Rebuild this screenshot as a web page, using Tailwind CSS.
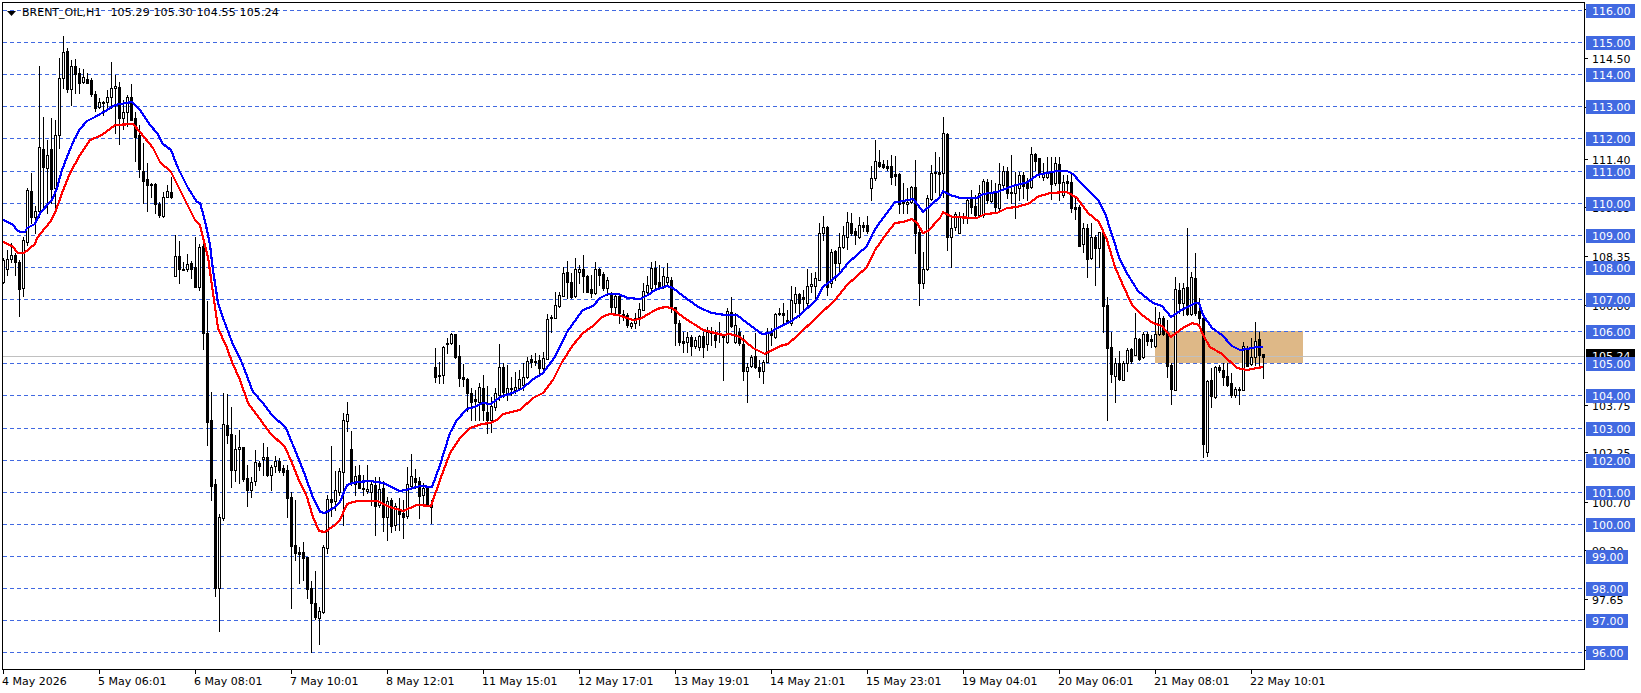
<!DOCTYPE html>
<html lang="en">
<head>
  <meta charset="UTF-8" />
  <title>BRENT_OIL,H1</title>
  <script src="https://cdn.jsdelivr.net/npm/@tailwindcss/browser@4"></script>
</head>
<body class="bg-white text-black overflow-hidden [font-family:'DejaVu_Sans',sans-serif] text-[11px] leading-[14px]">
  <div class="flex pt-[2px] pl-[2px]">
    <!-- chart window -->
    <div class="relative border border-black w-[1583px] h-[668px] shrink-0">
      <svg id="chart" class="block" width="1581" height="666" viewBox="3 3 1581 666" shape-rendering="crispEdges"></svg>
      <div class="absolute left-[4px] top-[3px] flex items-center whitespace-pre">
        <svg width="9" height="5" viewBox="0 0 9 5" class="mr-[6px]"><path d="M0 0H9L4.5 5Z" fill="#000"/></svg>
        <span>BRENT_OIL,H1</span><span class="ml-[9px] tracking-[0.15px]">105.29 105.30 104.55 105.24</span>
      </div>
    </div>
    <!-- price scale -->
    <div id="scale" class="relative w-[56px] h-[668px]"></div>
  </div>

  <!-- time scale -->
  <div id="times" class="flex pl-[3px]"></div>

  <script>
    // price level -> y pixel (as drawn by the terminal)
    const levels = [[116,10],[115,42],[114,74],[113,106],[112,138],[111,171],[110,203],[109,235],[108,267],[107,299],[106,331],
      [105,363],[104,395],[103,428],[102,460],[101,492],[100,524],[99,556],[98,588],[97,620],[96,652]];
    const axis = [['116.05',9],['114.50',58],['112.95',107],['111.40',159],['109.85',207],['108.35',256],['106.80',305],
      ['103.75',405],['102.25',452],['100.70',502],['99.20',550],['97.65',599],['96.10',650]];
    const times = ['4 May 2026','5 May 06:01','6 May 08:01','7 May 10:01','8 May 12:01','11 May 15:01','12 May 17:01',
      '13 May 19:01','14 May 21:01','15 May 23:01','19 May 04:01','20 May 06:01','21 May 08:01','22 May 10:01'];

    // candles: wick top, body top, body bottom, wick bottom, 1 = up bar (hollow)
    const bars = [
      [258,260,282,283,1],[250,259,269,275,1],[243,255,259,262,1],[253,255,262,275,0],[260,262,289,316,0],[237,240,288,296,1],
      [188,190,242,245,1],[173,191,217,223,0],[206,211,217,233,1],[66,147,211,217,1],[117,149,167,209,0],[140,155,168,213,1],
      [118,149,189,203,0],[120,135,188,212,1],[58,78,135,148,1],[36,52,78,88,1],[48,51,89,92,0],[60,66,89,105,1],
      [59,66,74,93,0],[68,73,83,93,0],[69,77,82,83,1],[73,79,83,83,0],[78,80,94,96,0],[91,94,108,111,0],
      [98,102,107,108,1],[101,102,103,115,1],[90,97,102,107,1],[62,88,97,108,1],[75,86,88,133,1],[82,87,118,144,0],
      [100,112,118,129,1],[95,97,112,126,1],[84,97,120,120,0],[112,118,137,161,0],[125,135,169,177,0],[143,171,181,203,0],
      [163,179,185,211,0],[183,184,185,197,0],[183,184,204,213,0],[202,204,215,217,0],[192,197,216,217,1],[185,191,197,197,1],
      [177,192,197,198,0],[235,256,276,276,1],[241,256,269,283,0],[262,269,270,270,0],[254,264,269,271,1],[261,263,269,278,0],
      [237,267,287,287,0],[244,247,287,290,1],[244,246,333,349,0],[301,333,422,445,0],[392,420,486,500,0],[479,484,588,596,0],
      [514,517,588,631,1],[393,424,518,520,1],[394,425,435,443,0],[407,434,470,487,0],[435,449,470,481,1],[430,447,449,483,1],
      [447,447,479,481,0],[465,478,490,506,0],[477,482,490,497,1],[450,462,481,485,1],[461,463,466,470,0],[443,457,459,475,1],
      [447,457,475,476,0],[465,467,475,490,1],[456,461,466,472,1],[458,461,470,472,0],[465,468,472,475,0],[465,470,498,517,0],
      [492,497,546,608,0],[500,545,553,560,0],[547,552,554,583,0],[542,552,558,580,0],[557,557,589,598,0],[581,588,603,652,0],
      [571,603,617,619,0],[607,611,618,644,1],[545,547,612,613,1],[495,499,548,553,1],[446,499,502,516,0],[471,490,501,510,1],
      [468,471,492,495,1],[413,420,472,525,1],[402,414,421,431,1],[431,449,483,485,0],[466,476,484,495,1],[465,475,488,488,0],
      [475,488,489,495,0],[465,489,491,493,1],[480,484,492,505,1],[477,485,506,535,0],[477,489,505,507,1],[481,488,517,531,0],
      [497,501,517,540,1],[498,500,526,532,0],[503,506,525,530,1],[498,510,514,530,0],[500,513,517,538,0],[467,484,516,518,1],
      [454,476,486,488,1],[469,478,482,488,0],[477,481,496,518,0],[483,488,495,503,1],[486,487,504,505,0],[500,505,507,523,1],
      [348,367,377,382,0],[362,375,376,383,0],[346,347,375,383,1],[338,343,344,353,1],[333,334,343,344,1],[334,334,357,358,0],
      [345,356,378,386,0],[364,377,379,386,0],[378,379,393,411,0],[388,393,402,420,0],[390,399,401,420,0],[383,387,402,420,1],
      [375,388,410,420,0],[386,412,420,433,0],[397,406,420,432,1],[388,393,407,410,1],[344,367,395,400,1],[363,367,392,397,0],
      [365,388,393,400,1],[377,388,389,395,0],[372,387,390,393,1],[370,379,388,390,1],[363,377,385,390,1],[357,361,377,378,1],
      [355,359,362,367,0],[353,361,362,365,0],[355,360,368,375,0],[352,358,368,373,1],[314,319,359,359,1],[315,317,318,332,1],
      [292,305,318,318,1],[292,295,306,307,1],[267,273,296,295,1],[261,272,282,298,0],[273,282,297,298,0],[258,269,296,297,1],
      [265,269,272,283,1],[255,269,276,292,0],[275,276,292,292,0],[275,289,293,297,0],[262,269,293,294,1],[268,269,275,285,0],
      [272,274,288,290,0],[277,280,288,295,1],[292,295,307,313,0],[295,296,307,313,1],[295,296,313,323,0],[310,314,315,320,0],
      [313,315,325,327,0],[322,323,326,328,1],[313,318,323,328,1],[303,309,317,325,1],[283,291,310,310,1],[276,285,292,295,1],
      [262,268,288,292,1],[261,268,284,290,0],[265,282,288,288,0],[268,276,286,288,1],[263,277,282,285,1],[277,280,307,312,0],
      [307,307,323,345,0],[320,323,342,345,0],[332,341,343,352,0],[332,337,342,352,1],[335,337,346,355,0],[337,340,346,348,1],
      [335,336,347,350,1],[332,336,347,357,0],[327,332,344,350,1],[327,332,333,345,1],[330,335,340,347,0],[322,333,334,342,1],
      [335,335,337,380,0],[308,311,342,343,1],[297,312,326,327,0],[313,325,342,343,1],[328,332,343,345,0],[335,344,371,380,0],
      [363,367,371,402,1],[355,357,366,367,1],[333,356,367,368,0],[360,367,371,377,0],[360,362,371,383,1],[328,333,362,362,1],
      [328,333,335,345,0],[313,314,337,338,1],[308,313,314,315,1],[303,313,315,323,0],[310,320,323,323,0],[286,300,323,325,1],
      [287,294,303,312,1],[293,294,303,317,0],[290,297,299,310,0],[269,286,303,305,1],[273,284,286,292,1],[272,278,286,298,1],
      [223,233,280,280,1],[216,227,233,240,1],[226,227,287,295,0],[249,252,283,287,1],[250,251,263,280,0],[233,247,263,273,1],
      [226,235,247,248,1],[212,222,237,249,1],[213,223,233,235,0],[228,231,235,244,0],[217,225,237,238,1],[222,225,227,231,0],
      [216,225,231,233,0],[166,178,188,200,1],[140,161,178,180,1],[150,162,166,167,0],[160,164,167,168,0],[160,166,168,170,0],
      [155,166,177,184,0],[156,174,176,185,0],[173,174,204,213,0],[183,202,203,213,1],[188,202,204,213,1],[186,187,202,203,1],
      [160,187,233,253,0],[225,232,283,305,0],[252,269,283,288,1],[195,198,269,270,1],[165,173,199,200,1],[152,172,173,192,1],
      [157,172,174,197,0],[117,133,173,197,1],[133,134,237,250,0],[217,228,237,267,1],[212,214,227,230,1],[212,216,233,233,1],
      [213,216,218,223,0],[197,200,218,223,1],[190,199,207,213,0],[195,206,215,217,0],[185,193,215,217,1],[179,181,215,217,1],
      [179,182,200,203,0],[180,192,201,202,1],[183,193,207,213,0],[163,184,208,210,1],[166,171,185,187,1],[167,171,193,198,0],
      [155,192,193,203,0],[172,185,193,218,1],[172,175,188,200,1],[172,175,186,198,0],[178,182,188,200,0],[147,154,187,188,1],
      [153,154,161,170,0],[158,158,173,177,0],[163,173,177,180,1],[157,173,177,178,1],[157,173,184,199,0],[157,163,183,185,1],
      [157,164,183,200,0],[175,182,195,197,1],[175,181,183,192,0],[173,182,208,212,0],[197,207,209,219,0],[205,207,246,246,0],
      [223,228,244,252,1],[224,228,259,277,0],[223,237,258,259,1],[235,237,248,285,0],[232,232,248,267,1],[232,232,306,332,0],
      [297,305,348,420,0],[332,347,374,382,0],[358,363,376,402,1],[351,363,379,380,0],[361,363,380,380,1],[348,350,363,371,1],
      [348,349,361,363,0],[313,338,355,355,1],[338,339,359,360,0],[332,334,357,358,1],[332,334,341,345,0],[335,339,341,347,0],
      [307,334,346,347,1],[312,318,334,335,1],[316,318,334,335,0],[320,332,366,377,0],[363,365,389,404,0],[277,289,390,390,1],
      [283,290,303,313,0],[283,288,303,315,1],[228,287,314,315,0],[272,277,314,315,1],[253,278,313,315,0],[298,311,318,323,0],
      [313,318,444,457,0],[380,381,452,456,1],[368,380,396,407,0],[366,367,397,398,1],[365,367,370,372,0],[363,370,377,385,0],
      [363,376,385,386,0],[373,383,395,397,0],[387,389,395,397,1],[387,389,390,404,1],[342,346,390,390,1],[346,350,366,366,0],
      [338,357,364,365,1],[322,341,357,365,1],[332,339,355,365,0],[355,354,357,378,0]
    ];

    const blue = [3,220,8,222,13,225,17,230,20,232,25,232,27,228,35,224,40,213,52,200,57,188,62,170,67,157,74,140,80,129,87,121,95,117,107,110,115,105,132,102,140,110,150,125,157,133,163,144,171,150,178,168,188,188,197,202,200,203,203,213,207,230,210,245,213,270,218,303,223,318,232,342,242,363,253,392,263,403,272,415,286,428,297,455,305,475,312,495,320,512,325,513,335,507,340,502,347,485,357,482,370,481,383,483,400,491,410,489,420,486,432,487,440,465,450,433,457,420,467,409,475,407,482,403,491,404,500,397,515,392,523,388,532,380,543,373,555,357,567,332,577,318,583,310,593,306,600,298,608,294,618,294,628,298,640,299,648,295,655,290,667,286,673,288,687,299,700,308,712,313,725,315,737,315,747,323,762,334,770,333,777,328,790,322,800,315,816,300,823,287,832,280,840,273,848,263,867,246,873,233,878,225,895,202,898,202,913,199,918,205,923,212,940,197,943,191,950,195,960,198,977,198,983,194,997,192,1013,186,1028,182,1037,175,1057,171,1067,171,1073,174,1080,182,1098,200,1105,213,1112,235,1120,260,1128,275,1138,291,1153,303,1162,306,1171,317,1183,309,1188,307,1195,303,1199,303,1203,315,1212,328,1222,335,1232,346,1240,350,1247,349,1257,347,1263,347];
    const red = [3,242,12,246,18,253,24,253,35,244,37,238,50,222,55,213,62,193,70,173,80,155,90,140,102,135,115,125,133,124,140,132,153,148,160,162,171,172,180,190,195,220,200,225,203,238,208,257,213,293,218,328,227,348,232,362,240,380,248,403,262,422,270,433,285,447,292,463,298,478,307,497,313,517,319,531,325,532,335,525,340,520,347,504,357,501,377,501,390,507,403,511,417,505,431,506,440,480,450,453,460,438,470,428,482,424,490,423,497,420,503,414,520,410,533,398,543,393,553,380,562,362,573,345,583,333,593,326,602,317,610,314,618,315,633,320,640,319,657,309,665,307,672,308,683,317,703,330,723,335,730,334,740,337,753,348,765,354,780,346,788,344,798,335,835,300,847,285,867,267,875,250,887,233,895,223,903,222,912,219,917,223,923,233,928,231,940,218,943,212,952,217,977,218,985,214,997,213,1007,208,1017,207,1030,203,1037,197,1050,193,1067,192,1077,198,1088,213,1099,222,1107,240,1115,267,1122,283,1132,305,1142,315,1153,323,1162,326,1171,337,1183,328,1192,323,1199,325,1203,335,1210,347,1222,354,1237,368,1247,370,1257,368,1263,367];

    // draw the chart
    let svg = '<rect x="1155" y="331" width="148" height="32" fill="#deb887"/>';
    svg += '<rect x="3" y="356" width="1581" height="1" fill="#c0c0c0"/>';
    levels.forEach(function (l) {
      svg += '<line x1="3" x2="1584" y1="' + (l[1] + 0.5) + '" y2="' + (l[1] + 0.5) + '" stroke="#4169e1" stroke-dasharray="4 3"/>';
    });
    let black = '', white = '';
    bars.forEach(function (b, i) {
      const x = 3 + 4 * i;
      black += 'M' + x + ' ' + b[0] + 'h1V' + (b[3] + 1) + 'h-1z';
      black += 'M' + (x - 1) + ' ' + b[1] + 'h3V' + (b[2] + 1) + 'h-3z';
      if (b[4] && b[2] - b[1] >= 2) white += 'M' + x + ' ' + (b[1] + 1) + 'h1V' + b[2] + 'h-1z';
    });
    svg += '<path d="' + black + '" fill="#000"/><path d="' + white + '" fill="#fff"/>';
    svg += '<polyline points="' + blue.join(' ') + '" fill="none" stroke="#0000ff" stroke-width="2.2"/>';
    svg += '<polyline points="' + red.join(' ') + '" fill="none" stroke="#ff0000" stroke-width="2.2"/>';
    document.getElementById('chart').innerHTML = svg;

    // price scale, y values are page pixels and the scale starts at y=2
    let scale = '';
    axis.forEach(function (a) {
      scale += '<div class="absolute left-0 w-[3px] h-px bg-black" style="top:' + (a[1] - 2) + 'px"></div>';
      scale += '<div class="absolute left-[7px] h-[14px] pt-[1px]" style="top:' + (a[1] - 8) + 'px">' + a[0] + '</div>';
    });
    scale += '<div class="absolute left-[1px] w-[49px] h-[14px] pt-[1px] pl-[6px] bg-black text-white" style="top:347px">105.24</div>';
    levels.forEach(function (l) {
      const text = l[0].toFixed(2);
      const wide = l[0] >= 100 ? 'w-[49px]' : 'w-[42px]';
      scale += '<div class="absolute left-[1px] h-[14px] pt-[1px] pl-[6px] bg-[#4169e1] text-white ' + wide + '" style="top:' + (l[1] - 8) + 'px">' + text + '</div>';
    });
    document.getElementById('scale').innerHTML = scale;

    // time scale
    document.getElementById('times').innerHTML = times.map(function (t) {
      return '<div class="w-[96px] shrink-0"><div class="w-px h-[4px] bg-black"></div><div class="-ml-px mt-[1px] whitespace-nowrap">' + t + '</div></div>';
    }).join('');
  </script>
</body>
</html>
